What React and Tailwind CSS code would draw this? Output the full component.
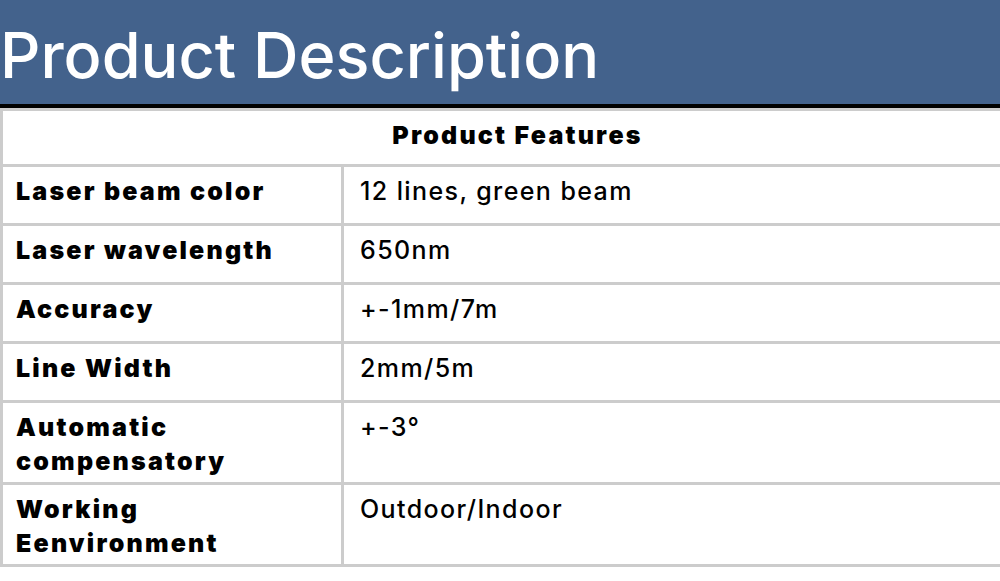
import React from 'react';

// Product description spec table
const features = [
  { label: ['Laser beam color'], value: '12 lines, green beam' },
  { label: ['Laser wavelength'], value: '650nm' },
  { label: ['Accuracy'], value: '+-1mm/7m' },
  { label: ['Line Width'], value: '2mm/5m' },
  { label: ['Automatic', 'compensatory'], value: '+-3°' },
  { label: ['Working', 'Eenvironment'], value: 'Outdoor/Indoor' },
];

const App = () => {
  return (
    <div className="w-[1000px] h-[581px] overflow-hidden bg-white">
      {/* Title bar */}
      <div className="h-[104px] bg-[#43628c] pt-[24px]">
        <h1
          className="text-[63px] leading-[63px] font-medium text-white whitespace-nowrap"
          style={{ fontFamily: 'Inter, "Liberation Sans", sans-serif' }}
        >
          Product Description
        </h1>
      </div>
      <div className="h-[4px] bg-black" />

      {/* Table */}
      <div
        className="w-[1032px] border-l-[3px] border-t-[3px] border-[#cccccc] text-black text-[25px] leading-[34px]"
        style={{ fontFamily: 'Inter, "DejaVu Sans", sans-serif' }}
      >
        <div className="min-h-[56px] pt-[7px] pb-[4px] border-b-[3px] border-[#cccccc] text-center font-black tracking-[2.2px]">
          Product Features
        </div>

        {features.map((row, idx) => (
          <div key={idx} className="flex border-b-[3px] border-[#cccccc]">
            <div className="w-[341px] shrink-0 min-h-[56px] pt-[7px] pb-[4px] pl-[13px] border-r-[3px] border-[#cccccc] font-black tracking-[2.2px]">
              {row.label.map((line, i) => (
                <div key={i}>{line}</div>
              ))}
            </div>
            <div className="flex-1 min-h-[56px] pt-[7px] pb-[4px] pl-[16px] font-medium tracking-[1.4px]">
              {row.value}
            </div>
          </div>
        ))}
      </div>
    </div>
  );
};

export default App;
